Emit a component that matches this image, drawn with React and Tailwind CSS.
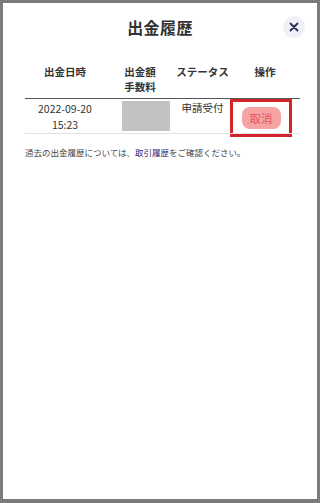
import React from 'react';

const font = { fontFamily: '"Noto Sans CJK JP", "Noto Sans", sans-serif' };

function CloseButton() {
  return (
    <button className="flex h-[22px] w-[22px] items-center justify-center rounded-full bg-[#f0f0f7]">
      <svg width="10" height="10" viewBox="0 0 10 10" fill="none">
        <path d="M1.5 1.5 L8.5 8.5 M8.5 1.5 L1.5 8.5" stroke="#2a2a5a" strokeWidth="1.8" strokeLinecap="round" />
      </svg>
    </button>
  );
}

export default function App() {
  return (
    <div className="h-[503px] w-[320px] bg-[#7b7b7b] pb-[4px] pl-[3px] pr-[3px] pt-[3px]" style={font}>
      <div className="h-full w-full bg-white">
        <div className="relative flex h-[48px] items-center justify-center">
          <h1 className="text-[16px] font-bold tracking-wide text-[#333]">出金履歴</h1>
          <div className="absolute right-[12px] top-[13px]">
            <CloseButton />
          </div>
        </div>

        <div className="px-[22px] pt-[13px]">
          <table className="w-[275px] table-fixed text-[10.5px] text-[#333]">
            <colgroup>
              <col className="w-[80px]" />
              <col className="w-[70px]" />
              <col className="w-[55px]" />
              <col className="w-[70px]" />
            </colgroup>
            <thead>
              <tr className="border-b-[1.5px] border-[#555]">
                <th className="pb-[4px] align-top font-bold leading-[15px]">出金日時</th>
                <th className="pb-[4px] align-top font-bold leading-[15px]">
                  出金額
                  <br />
                  手数料
                </th>
                <th className="pb-[4px] align-top font-bold leading-[15px]">ステータス</th>
                <th className="pb-[4px] align-top font-bold leading-[15px]">操作</th>
              </tr>
            </thead>
            <tbody>
              <tr className="border-b border-[#e2e2e2]">
                <td className="pt-[2px] text-center align-top leading-[16px]">
                  2022-09-20
                  <br />
                  15:23
                </td>
                <td className="pt-[2px] align-top">
                  <div className="ml-[17px] h-[30px] w-[48px] bg-[#c2c2c2]" />
                </td>
                <td className="pt-[1px] text-center align-top leading-[16px]">申請受付</td>
                <td className="pr-[8px] align-top">
                  <div className="-mb-[4px] flex h-[38px] items-center justify-center border-[3px] border-[#d3232b]">
                    <span className="rounded-[8px] bg-[#f5a3a3] px-[8px] py-[3px] text-[11.5px] leading-[16px] text-[#e4575d]">
                      取消
                    </span>
                  </div>
                </td>
              </tr>
            </tbody>
          </table>
          <p className="mt-[12px] text-[8.5px] text-[#444]">
            過去の出金履歴については、<span className="text-[#1f2a7a]">取引履歴</span>をご確認ください。
          </p>
        </div>
      </div>
    </div>
  );
}
